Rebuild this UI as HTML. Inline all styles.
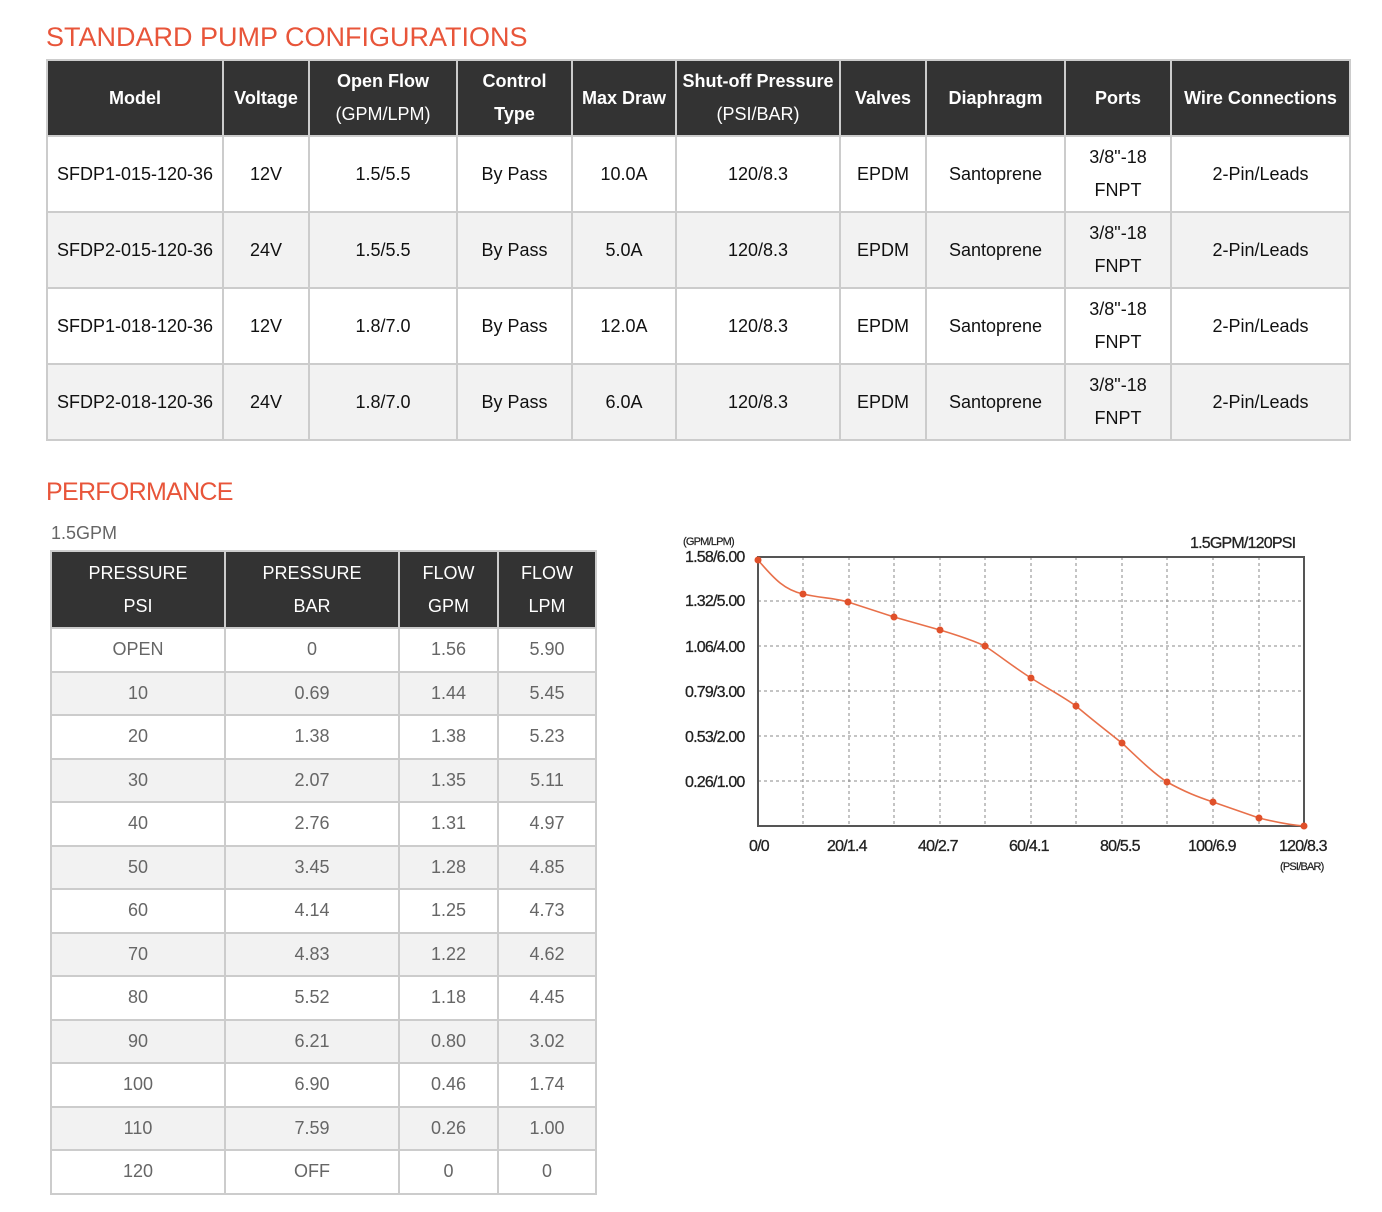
<!DOCTYPE html>
<html><head><meta charset="utf-8"><style>
body{margin:0;background:#fff;font-family:"Liberation Sans",Arial,sans-serif;width:1382px;height:1212px;position:relative;overflow:hidden}
h2{position:absolute;margin:0;font-weight:normal;color:#e8553a;font-size:27px}
table{position:absolute;border-collapse:collapse;table-layout:fixed;border:2px solid #ccc}
td,th{border:2px solid #ccc;text-align:center;padding:0;font-size:18px}
th{background:#333;color:#fff;border-color:#ccc;line-height:33px}
#t1 th{font-weight:bold;height:74px}
#t1 td{height:74px;color:#111;line-height:24px}
#t1 tr:nth-child(odd) td{background:#f2f2f2}
#t2 th{font-weight:normal;height:75px}
#t2 td{height:41.5px;color:#666}
#t2 tr:nth-child(odd) td{background:#f2f2f2}
</style></head><body>
<h2 style="left:46px;top:22px">STANDARD PUMP CONFIGURATIONS</h2>
<table id="t1" style="left:46px;top:59px;width:1303px">
<colgroup><col style="width:176px"><col style="width:86px"><col style="width:148px"><col style="width:115px"><col style="width:104px"><col style="width:164px"><col style="width:86px"><col style="width:139px"><col style="width:106px"><col style="width:179px"></colgroup>
<tr><th>Model</th><th>Voltage</th><th>Open Flow<br><span style="font-weight:normal">(GPM/LPM)</span></th><th>Control<br>Type</th><th>Max Draw</th><th>Shut-off Pressure<br><span style="font-weight:normal">(PSI/BAR)</span></th><th>Valves</th><th>Diaphragm</th><th>Ports</th><th>Wire Connections</th></tr>
<tr><td>SFDP1-015-120-36</td><td>12V</td><td>1.5/5.5</td><td>By Pass</td><td>10.0A</td><td>120/8.3</td><td>EPDM</td><td>Santoprene</td><td style="line-height:33px">3/8"-18<br>FNPT</td><td>2-Pin/Leads</td></tr>
<tr><td>SFDP2-015-120-36</td><td>24V</td><td>1.5/5.5</td><td>By Pass</td><td>5.0A</td><td>120/8.3</td><td>EPDM</td><td>Santoprene</td><td style="line-height:33px">3/8"-18<br>FNPT</td><td>2-Pin/Leads</td></tr>
<tr><td>SFDP1-018-120-36</td><td>12V</td><td>1.8/7.0</td><td>By Pass</td><td>12.0A</td><td>120/8.3</td><td>EPDM</td><td>Santoprene</td><td style="line-height:33px">3/8"-18<br>FNPT</td><td>2-Pin/Leads</td></tr>
<tr><td>SFDP2-018-120-36</td><td>24V</td><td>1.8/7.0</td><td>By Pass</td><td>6.0A</td><td>120/8.3</td><td>EPDM</td><td>Santoprene</td><td style="line-height:33px">3/8"-18<br>FNPT</td><td>2-Pin/Leads</td></tr>
</table>
<h2 style="left:46px;top:478px;font-size:25px;letter-spacing:-0.7px">PERFORMANCE</h2>
<div style="position:absolute;left:51px;top:523px;font-size:18px;color:#666">1.5GPM</div>
<table id="t2" style="left:50px;top:550px;width:545px">
<colgroup><col style="width:174px"><col style="width:174px"><col style="width:99px"><col style="width:98px"></colgroup>
<tr><th>PRESSURE<br>PSI</th><th>PRESSURE<br>BAR</th><th>FLOW<br>GPM</th><th>FLOW<br>LPM</th></tr>
<tr><td>OPEN</td><td>0</td><td>1.56</td><td>5.90</td></tr>
<tr><td>10</td><td>0.69</td><td>1.44</td><td>5.45</td></tr>
<tr><td>20</td><td>1.38</td><td>1.38</td><td>5.23</td></tr>
<tr><td>30</td><td>2.07</td><td>1.35</td><td>5.11</td></tr>
<tr><td>40</td><td>2.76</td><td>1.31</td><td>4.97</td></tr>
<tr><td>50</td><td>3.45</td><td>1.28</td><td>4.85</td></tr>
<tr><td>60</td><td>4.14</td><td>1.25</td><td>4.73</td></tr>
<tr><td>70</td><td>4.83</td><td>1.22</td><td>4.62</td></tr>
<tr><td>80</td><td>5.52</td><td>1.18</td><td>4.45</td></tr>
<tr><td>90</td><td>6.21</td><td>0.80</td><td>3.02</td></tr>
<tr><td>100</td><td>6.90</td><td>0.46</td><td>1.74</td></tr>
<tr><td>110</td><td>7.59</td><td>0.26</td><td>1.00</td></tr>
<tr><td>120</td><td>OFF</td><td>0</td><td>0</td></tr>
</table>
<svg style="position:absolute;left:0;top:0" width="1382" height="1212">
<g stroke="#888" stroke-width="1" stroke-dasharray="3,3">
<line x1="803" y1="557" x2="803" y2="826"/><line x1="849" y1="557" x2="849" y2="826"/><line x1="894" y1="557" x2="894" y2="826"/><line x1="940" y1="557" x2="940" y2="826"/><line x1="985" y1="557" x2="985" y2="826"/><line x1="1031" y1="557" x2="1031" y2="826"/><line x1="1076" y1="557" x2="1076" y2="826"/><line x1="1122" y1="557" x2="1122" y2="826"/><line x1="1167" y1="557" x2="1167" y2="826"/><line x1="1213" y1="557" x2="1213" y2="826"/><line x1="1259" y1="557" x2="1259" y2="826"/>
<line x1="758" y1="601" x2="1304" y2="601"/><line x1="758" y1="646" x2="1304" y2="646"/><line x1="758" y1="691" x2="1304" y2="691"/><line x1="758" y1="736" x2="1304" y2="736"/><line x1="758" y1="781" x2="1304" y2="781"/>
</g>
<rect x="758" y="557" width="546" height="269" fill="none" stroke="#555" stroke-width="2"/>
<path d="M758,560 C775,580 785,590 803,594 C820,598 835,598 848,602 L894,617 L940,630 C960,636 972,640 985,646 C1000,656 1015,668 1031,678 C1050,690 1062,696 1076,706 C1095,722 1108,732 1122,743 C1138,758 1152,772 1167,782 C1185,792 1198,797 1213,802 L1259,818 C1275,822 1290,825 1304,826" fill="none" stroke="#e8704a" stroke-width="1.6"/>
<g fill="#e0502a">
<circle cx="758" cy="560" r="3.5"/><circle cx="803" cy="594" r="3.5"/><circle cx="848" cy="602" r="3.5"/><circle cx="894" cy="617" r="3.5"/><circle cx="940" cy="630" r="3.5"/><circle cx="985" cy="646" r="3.5"/><circle cx="1031" cy="678" r="3.5"/><circle cx="1076" cy="706" r="3.5"/><circle cx="1122" cy="743" r="3.5"/><circle cx="1167" cy="782" r="3.5"/><circle cx="1213" cy="802" r="3.5"/><circle cx="1259" cy="818" r="3.5"/><circle cx="1304" cy="826" r="3.5"/>
</g>
<g font-family="Liberation Sans Narrow,Liberation Sans,sans-serif" fill="#222" font-size="16" letter-spacing="-0.8" stroke="#222" stroke-width="0.3">
<text x="683" y="545" font-size="11" stroke-width="0.2">(GPM/LPM)</text>
<text x="685" y="562">1.58/6.00</text>
<text x="685" y="606">1.32/5.00</text>
<text x="685" y="652">1.06/4.00</text>
<text x="685" y="697">0.79/3.00</text>
<text x="685" y="742">0.53/2.00</text>
<text x="685" y="787">0.26/1.00</text>
<text x="1190" y="548">1.5GPM/120PSI</text>
<text x="749" y="851">0/0</text>
<text x="827" y="851">20/1.4</text>
<text x="918" y="851">40/2.7</text>
<text x="1009" y="851">60/4.1</text>
<text x="1100" y="851">80/5.5</text>
<text x="1188" y="851">100/6.9</text>
<text x="1279" y="851">120/8.3</text>
<text x="1280" y="870" font-size="11" stroke-width="0.2">(PSI/BAR)</text>
</g>
</svg>
</body></html>
